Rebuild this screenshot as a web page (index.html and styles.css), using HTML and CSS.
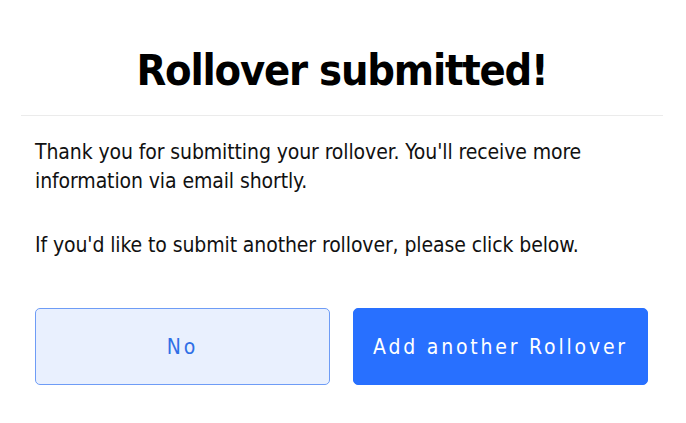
FILE: index.html
```
<!DOCTYPE html>
<html lang="en">
<head>
    <meta charset="UTF-8">
    <meta name="viewport" content="width=device-width, initial-scale=1.0">
    <title>Rollover submitted</title>
    <link rel="stylesheet" href="styles.css">
</head>
<body>
    <div class="modal">
        <h1 class="modal-title">Rollover submitted!</h1>
        <div class="modal-body">
            <p>Thank you for submitting your rollover. You'll receive more information via email shortly.</p>
            <p>If you'd like to submit another rollover, please click below.</p>
            <div class="actions">
                <button class="btn btn-secondary">No</button>
                <button class="btn btn-primary">Add another Rollover</button>
            </div>
        </div>
    </div>
</body>
</html>
```

FILE: styles.css
```
body {
    margin: 0;
    padding: 0;
    background: #fff;
    color: #111;
    font-family: "Liberation Sans Narrow", "DejaVu Sans Condensed", Arial, sans-serif;
}
.modal {
    width: 642px;
    margin: 0 auto 0 21px;
}
.modal-title {
    margin: 0;
    padding: 45px 0 20px;
    text-align: center;
    font-size: 43px;
    line-height: 50px;
    letter-spacing: -1.2px;
    font-weight: bold;
    color: #000;
    border-bottom: 1px solid #ebebeb;
}
.modal-body {
    padding: 22px 15px 0 14px;
}
.modal-body p {
    margin: 0 0 35px;
    font-size: 21px;
    line-height: 29px;
    letter-spacing: -0.1px;
}
.actions {
    display: grid;
    grid-template-columns: 1fr 1fr;
    gap: 23px;
    margin-top: 48px;
}
.btn {
    height: 77px;
    border-radius: 5px;
    font-family: inherit;
    font-size: 21px;
    letter-spacing: 2.8px;
    cursor: pointer;
}
.btn-secondary {
    background-color: #e9f0fe;
    border: 1px solid #6e9cf6;
    color: #2f6fe6;
}
.btn-primary {
    background-color: #2870ff;
    border: 1px solid #2870ff;
    color: #fff;
}
```
